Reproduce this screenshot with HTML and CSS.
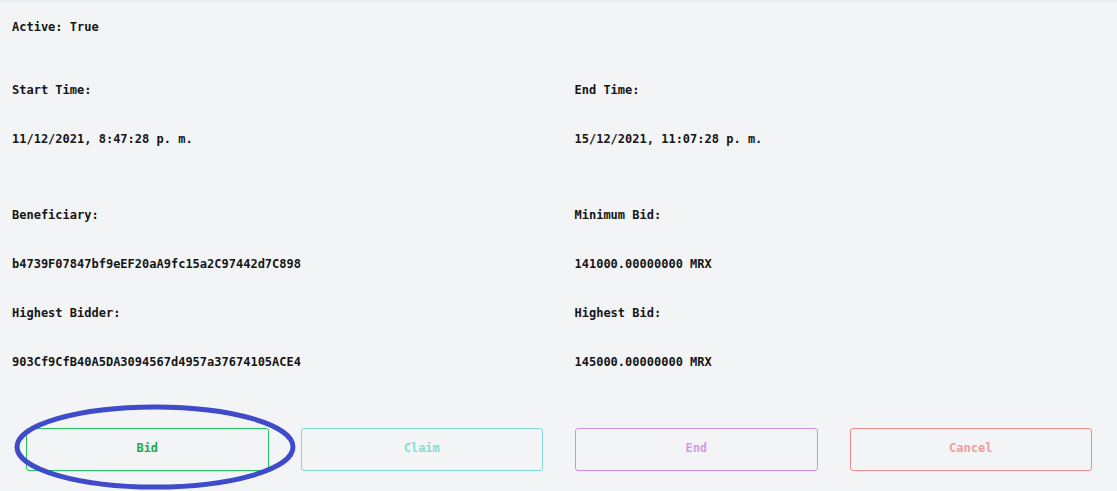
FILE: index.html
```html
<!DOCTYPE html>
<html lang="en">
<head>
<meta charset="utf-8">
<title>Auction</title>
<link rel="stylesheet" href="styles.css">
</head>
<body>
<main class="card">
  <p class="status">Active: True</p>
  <div class="fields">
    <div class="field times">
      <p>Start Time:</p>
      <p>11/12/2021, 8:47:28 p. m.</p>
    </div>
    <div class="field times">
      <p>End Time:</p>
      <p>15/12/2021, 11:07:28 p. m.</p>
    </div>
    <div class="field">
      <p>Beneficiary:</p>
      <p>b4739F07847bf9eEF20aA9fc15a2C97442d7C898</p>
    </div>
    <div class="field">
      <p>Minimum Bid:</p>
      <p>141000.00000000 MRX</p>
    </div>
    <div class="field">
      <p>Highest Bidder:</p>
      <p>903Cf9CfB40A5DA3094567d4957a37674105ACE4</p>
    </div>
    <div class="field">
      <p>Highest Bid:</p>
      <p>145000.00000000 MRX</p>
    </div>
  </div>
  <div class="actions">
    <button class="btn btn-bid">Bid</button>
    <button class="btn btn-claim" disabled>Claim</button>
    <button class="btn btn-end" disabled>End</button>
    <button class="btn btn-cancel" disabled>Cancel</button>
  </div>
</main>
<svg class="annotation" width="290" height="92" viewBox="0 0 290 92" aria-hidden="true">
  <ellipse cx="145" cy="45" rx="138" ry="40" fill="none" stroke="#3f4bc8" stroke-width="5"/>
</svg>
</body>
</html>
```
FILE: styles.css
```css
html, body {
  margin: 0;
  padding: 0;
}
body {
  background: #f3f4f6;
  font-family: "DejaVu Sans Mono", "Liberation Mono", monospace;
  font-size: 12px;
  font-weight: bold;
  line-height: 16px;
  color: #151515;
  position: relative;
  height: 491px;
  overflow: hidden;
  box-shadow: inset 0 3px 3px -2px rgba(0, 0, 0, 0.06);
}
p {
  margin: 0;
}
.card {
  padding: 19px 12px 0;
}
.status {
  margin-bottom: 47px;
}
.fields {
  display: grid;
  grid-template-columns: 1fr 1fr;
  column-gap: 32px;
  row-gap: 33px;
}
.field {
  display: flex;
  flex-direction: column;
  gap: 33px;
}
.field.times {
  margin-bottom: 27px;
}
.actions {
  display: grid;
  grid-template-columns: repeat(4, 1fr);
  gap: 32px;
  margin: 58px 13px 0 14px;
}
.btn {
  height: 43px;
  background: transparent;
  border: 1px solid;
  border-radius: 3px;
  font-family: inherit;
  font-size: 12px;
  font-weight: bold;
  padding: 0 0 4px;
}
.btn-bid {
  border-color: #22c55e;
  color: #1fa94a;
}
.btn-claim {
  border-color: #7fd9d1;
  color: #8adbd3;
}
.btn-end {
  border-color: #d18fe9;
  color: #d49ae8;
}
.btn-cancel {
  border-color: #f08c8c;
  color: #ef9d9d;
}
.annotation {
  position: absolute;
  left: 10px;
  top: 402px;
}
```
